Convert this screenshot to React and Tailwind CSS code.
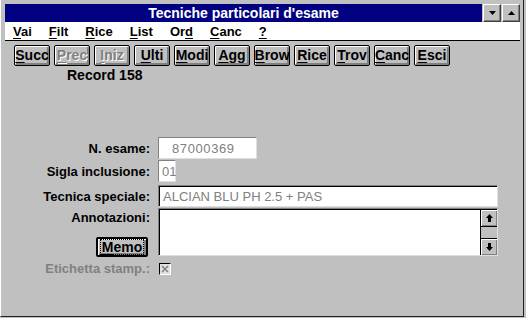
import React from 'react';

const FONT = "font-['Liberation_Sans',Arial,sans-serif]";

const U = ({ children }) => <span className="underline underline-offset-[2px] decoration-1">{children}</span>;

const ToolBtn = ({ u, rest, disabled }) => (
    <div className="h-[21px] w-[36px] shrink-0 border border-black rounded-[2px] bg-[#c0c0c0] shadow-[inset_1px_1px_0_#fff,inset_-2px_-2px_0_#808080] flex items-center justify-center pb-[1px] overflow-hidden">
        <span
            className={`text-[14px] font-bold leading-none whitespace-nowrap ${disabled ? 'text-[#808080] [text-shadow:1px_1px_0_#fff]' : 'text-black'}`}
        >
            <U>{u}</U>{rest}
        </span>
    </div>
);

const CaptionBtn = ({ up }) => (
    <div className="h-[18px] w-[18px] bg-[#c0c0c0] border-t border-l border-white border-r border-b border-r-[#404040] border-b-[#404040] shadow-[inset_-1px_-1px_0_#808080] flex items-center justify-center">
        <svg width="7" height="4" viewBox="0 0 7 4">
            {up ? <polygon points="0,4 7,4 3.5,0" fill="#000" /> : <polygon points="0,0 7,0 3.5,4" fill="#000" />}
        </svg>
    </div>
);

const ScrollBtn = ({ up }) => (
    <div className="h-[16px] w-[16px] bg-[#c0c0c0] shadow-[inset_1px_1px_0_#fff,inset_-1px_-1px_0_#808080] flex items-center justify-center">
        <svg width="7" height="8" viewBox="0 0 7 8">
            {up ? (
                <>
                    <polygon points="0,4 7,4 3.5,0" fill="#000" />
                    <rect x="2" y="4" width="3" height="4" fill="#000" />
                </>
            ) : (
                <>
                    <polygon points="0,4 7,4 3.5,8" fill="#000" />
                    <rect x="2" y="0" width="3" height="4" fill="#000" />
                </>
            )}
        </svg>
    </div>
);

const Label = ({ children, gray }) => (
    <div className={`w-[145px] shrink-0 text-right text-[13px] font-bold leading-none ${gray ? 'text-[#808080]' : 'text-black'}`}>
        {children}
    </div>
);

const menu = [
    ['V', 'ai'], ['F', 'ilt'], ['R', 'ice'], ['L', 'ist'], ['Or', 'd', true], ['C', 'anc'], ['?', ''],
];

const tools = [
    ['S', 'ucc'], ['P', 'rec', true], ['I', 'niz', true], ['U', 'lti'], ['M', 'odi'], ['A', 'gg'],
    ['B', 'row'], ['R', 'ice'], ['T', 'rov'], ['C', 'anc'], ['E', 'sci'],
];

export default function App() {
    return (
        <div className={`w-[526px] h-[318px] bg-[#c0c0c0] ${FONT} select-none`}>
            <div className="w-[524px] h-[317px] border-l border-l-white border-r border-b border-r-[#202020] border-b-[#202020] pt-[4px] pl-[4px] pr-[3px] flex flex-col">
                {/* Title bar */}
                <div className="h-[18px] flex items-stretch gap-[1px]">
                    <div className="flex-1 bg-[#000080] flex items-center justify-center">
                        <span className="text-white text-[14px] font-bold leading-none">Tecniche particolari d'esame</span>
                    </div>
                    <CaptionBtn />
                    <CaptionBtn up />
                </div>

                {/* Menu bar */}
                <div className="h-[19px] bg-white border-b border-black flex items-center gap-[17px] pl-[8px] pr-1">
                    {menu.map(([a, b, late], i) => (
                        <span key={i} className="text-[13px] font-bold leading-none text-black whitespace-nowrap">
                            {late ? <>{a}<U>{b}</U></> : <><U>{a}</U>{b}</>}
                        </span>
                    ))}
                </div>

                {/* Toolbar */}
                <div className="mt-[4px] pl-[9px] flex gap-[4px]">
                    {tools.map(([u, r, d], i) => <ToolBtn key={i} u={u} rest={r} disabled={d} />)}
                </div>

                <div className="mt-[2px] pl-[62px] text-[14px] font-bold leading-[14px] text-black">Record 158</div>

                {/* Form */}
                <div className="mt-[55px] flex flex-col">
                    <div className="flex items-center gap-[8px] h-[22px]">
                        <Label>N. esame:</Label>
                        <div className="w-[99px] h-[22px] bg-white border-t border-l border-[#808080] border-b border-r border-b-[#dfdfdf] border-r-[#dfdfdf] flex items-center pl-[13px]">
                            <span className="text-[13px] leading-none text-[#808080] tracking-[0.6px]">87000369</span>
                        </div>
                    </div>
                    <div className="mt-[1px] flex items-center gap-[8px] h-[22px]">
                        <Label>Sigla inclusione:</Label>
                        <div className="w-[18px] h-[22px] bg-white border-t border-l border-[#808080] border-b border-r border-b-[#dfdfdf] border-r-[#dfdfdf] flex items-center pl-[3px]">
                            <span className="text-[13px] leading-none text-[#808080]">01</span>
                        </div>
                    </div>
                    <div className="mt-[3px] flex items-center gap-[8px] h-[22px]">
                        <Label>Tecnica speciale:</Label>
                        <div className="w-[340px] h-[22px] bg-white border-t border-l border-[#808080] border-b border-r border-b-[#dfdfdf] border-r-[#dfdfdf] shadow-[inset_1px_1px_0_#000] flex items-center pl-[4px]">
                            <span className="text-[13px] leading-none text-[#808080]">ALCIAN BLU PH 2.5 + PAS</span>
                        </div>
                    </div>
                    <div className="mt-[1px] flex gap-[8px] h-[48px]">
                        <div className="w-[145px] shrink-0 flex flex-col items-end">
                            <div className="mt-[3px] text-[13px] font-bold leading-none text-black">Annotazioni:</div>
                            <div className="mt-[13px] mr-[2px] w-[52px] h-[23px] border-2 border-black rounded-[2px] bg-[#c0c0c0] shadow-[inset_1px_1px_0_#fff,inset_-2px_-2px_0_#808080] flex items-center justify-center">
                                <span className="border border-dotted border-black px-[1px] text-[14px] font-bold leading-[14px] text-black">
                                    <U>M</U>emo
                                </span>
                            </div>
                        </div>
                        <div className="w-[340px] h-[48px] bg-white border-t border-l border-[#808080] border-b border-r border-b-[#dfdfdf] border-r-[#dfdfdf] shadow-[inset_1px_1px_0_#000] flex justify-end">
                            <div className="w-[17px] border-l border-black flex flex-col pt-[1px]">
                                <ScrollBtn up />
                                <div className="flex-1 bg-[#c0c0c0] border-y border-black" />
                                <ScrollBtn />
                            </div>
                        </div>
                    </div>
                    <div className="mt-[6px] flex items-center gap-[8px] h-[13px]">
                        <Label gray>Etichetta stamp.:</Label>
                        <div className="ml-[1px] w-[12px] h-[12px] bg-[#e0e0e0] border-t border-l border-black border-b border-r border-b-white border-r-white flex items-center justify-center">
                            <svg width="8" height="8" viewBox="0 0 8 8">
                                <path d="M1 1 L7 7 M7 1 L1 7" stroke="#808080" strokeWidth="1.5" />
                            </svg>
                        </div>
                    </div>
                </div>
            </div>
        </div>
    );
}
